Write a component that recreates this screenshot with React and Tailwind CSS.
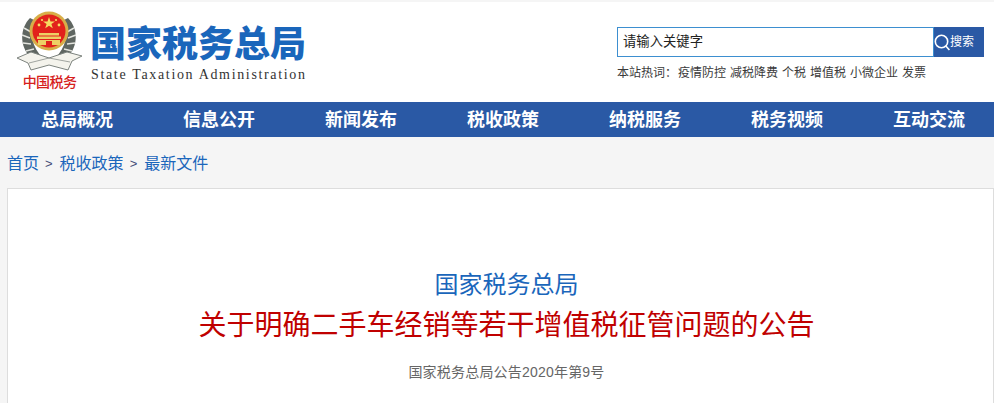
import React from "react";

const cjk = "font-['Liberation_Sans','Noto_Sans_CJK_SC',sans-serif]";
const navItems = ["总局概况", "信息公开", "新闻发布", "税收政策", "纳税服务", "税务视频", "互动交流"];
const hotWords = ["疫情防控", "减税降费", "个税", "增值税", "小微企业", "发票"];

function Emblem() {
  return (
    <svg width="65" height="64" viewBox="0 0 65 64" className="block">
      {/* wheat wreath */}
      <path d="M13 10 C3 20 2 38 14 50 L26 50 C15 40 12 24 17 12 Z" fill="#5f6661" />
      <path d="M51 10 C61 20 62 38 50 50 L38 50 C49 40 52 24 47 12 Z" fill="#5f6661" />
      <path d="M7 20 L14 24 M5 27 L13 30 M6 35 L14 36 M9 43 L17 41 M57 20 L50 24 M59 27 L51 30 M58 35 L50 36 M55 43 L47 41" stroke="#e4e5df" strokeWidth="1.5" />
      {/* ribbon */}
      <path d="M0 50 L14 44 L32 50 L50 44 L65 48 L55 53 L51 62 L32 57 L14 62 L11 55 Z" fill="#f4f3ec" stroke="#7d837e" strokeWidth="1" />
      <path d="M12 55 L32 50 L53 54" fill="none" stroke="#8a8f8a" strokeWidth="0.8" />
      {/* red disc with gold rim */}
      <circle cx="32" cy="23" r="19.5" fill="#d8ae48" />
      <circle cx="32" cy="23" r="16.5" fill="#e2221b" />
      {/* stars */}
      <path d="M32 9 L33.5 13.4 L38 13.4 L34.4 16.1 L35.8 20.3 L32 17.8 L28.2 20.3 L29.6 16.1 L26 13.4 L30.5 13.4 Z" fill="#f6dc62" />
      <circle cx="22" cy="17" r="1.4" fill="#f6dc62" />
      <circle cx="42" cy="17" r="1.4" fill="#f6dc62" />
      <circle cx="25" cy="12" r="1.1" fill="#f6dc62" />
      <circle cx="39" cy="12" r="1.1" fill="#f6dc62" />
      {/* gate */}
      <path d="M22 25 H42 V27.5 H22 Z M20 28.5 H44 V31 H20 Z M21 32 H43 V37 H21 Z" fill="#edd065" />
      <path d="M29 33 H35 V37 H29 Z" fill="#e2221b" />
    </svg>
  );
}

export default function App() {
  return (
    <div className={`w-[994px] h-[403px] overflow-hidden bg-[#f5f5f5] ${cjk}`}>
      <header className="h-[100px] mt-[2px] bg-white flex justify-between">
        <div className="flex pl-[17px]">
          <div className="w-[65px] pt-[6px] flex flex-col items-center">
            <Emblem />
            <span className="text-[14px] leading-[18px] font-medium text-[#d6201c] whitespace-nowrap mt-[1px] tracking-[-0.6px]">中国税务</span>
          </div>
          <div className="ml-[8px] pt-[22px] flex flex-col">
            <h1 className="text-[36px] leading-[41px] font-black text-[#1a66bb] whitespace-nowrap">国家税务总局</h1>
            <p className="mt-[1px] ml-[1px] text-[14px] leading-[18px] tracking-[1.66px] text-[#333333] font-['Liberation_Serif',serif] whitespace-nowrap">
              State Taxation Administration
            </p>
          </div>
        </div>
        <div className="w-[377px] pt-[25px]">
          <div className="flex h-[30px]">
            <div className="w-[317px] border border-[#3d8fd0] bg-white pl-[5px] text-[13.33px] leading-[27px] text-[#222222]">请输入关键字</div>
            <button className="w-[50px] bg-[#2a59a5] flex items-center text-white text-[12px]">
              <svg width="16" height="17" viewBox="0 0 16 17" fill="none" stroke="#ffffff" strokeWidth="1.6" className="shrink-0 mt-[1px]">
                <circle cx="7.5" cy="7.5" r="6.2" />
                <path d="M11.8 12 L15.4 16" />
              </svg>
              <span className="whitespace-nowrap">搜索</span>
            </button>
          </div>
          <div className="mt-[8px] flex items-center text-[12px] leading-[16px] text-[#3a3a3a] whitespace-nowrap">
            <span className="mr-[1px]">本站热词：</span>
            <div className="flex gap-[4px]">
              {hotWords.map((w) => (
                <a key={w} className="text-[#3a3a3a]">{w}</a>
              ))}
            </div>
          </div>
        </div>
      </header>

      <nav className="h-[35px] bg-[#2a59a5] flex pl-[6px] overflow-hidden">
        {navItems.map((item) => (
          <a key={item} className="w-[142px] shrink-0 text-center text-[18px] leading-[37px] font-bold text-white">{item}</a>
        ))}
      </nav>

      <div className="h-[51px] pl-[7px] pt-[2px] flex items-center text-[16px] text-[#1a66bb] whitespace-nowrap">
        <a>首页</a>
        <span className="ml-[6px] mr-[7px] text-[13px] text-[#444c78]">&gt;</span>
        <a>税收政策</a>
        <span className="ml-[6px] mr-[7px] text-[13px] text-[#444c78]">&gt;</span>
        <a>最新文件</a>
      </div>

      <main className="ml-[7px] h-[300px] bg-white border border-[#dddddd] flex flex-col items-center pt-[80px] pl-[12px]">
        <h2 className="text-[24px] leading-[32px] text-[#1a66bb] whitespace-nowrap">国家税务总局</h2>
        <h3 className="mt-[6px] text-[28px] leading-[38px] text-[#c00000] whitespace-nowrap">关于明确二手车经销等若干增值税征管问题的公告</h3>
        <p className="mt-[17px] text-[14px] leading-[20px] tracking-[0.2px] text-[#666666] whitespace-nowrap">国家税务总局公告2020年第9号</p>
      </main>
    </div>
  );
}
